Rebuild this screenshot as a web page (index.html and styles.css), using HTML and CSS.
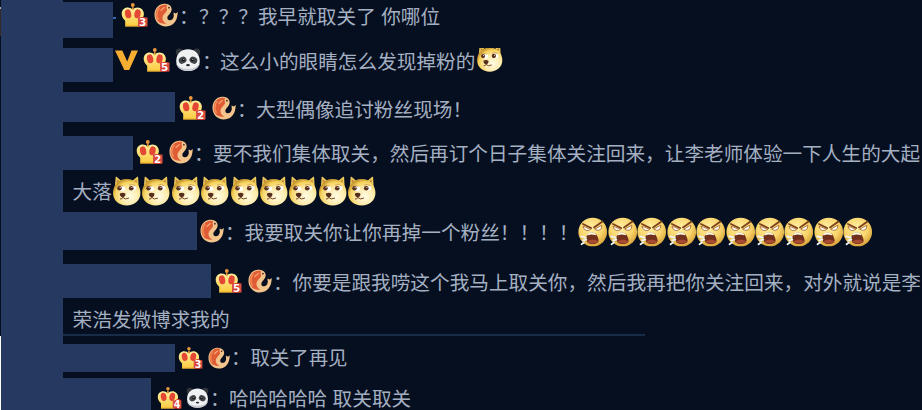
FILE: index.html
```
<!DOCTYPE html>
<html lang="zh-CN">
<head>
    <meta charset="UTF-8">
    <meta name="viewport" content="width=device-width, initial-scale=1.0">
    <title>评论</title>
    <link rel="stylesheet" href="styles.css">
</head>
<body>
    <!-- Icon definitions -->
    <svg class="defs" width="0" height="0">
        <defs>
            <radialGradient id="gold" cx="45%" cy="35%" r="65%">
                <stop offset="0" stop-color="#fff0a6"/>
                <stop offset="0.6" stop-color="#f9d56c"/>
                <stop offset="1" stop-color="#d9a53a"/>
            </radialGradient>
            <radialGradient id="fur" cx="62%" cy="66%" r="65%">
                <stop offset="0" stop-color="#fffbe6"/>
                <stop offset="0.5" stop-color="#fdebaa"/>
                <stop offset="0.85" stop-color="#f5d15c"/>
                <stop offset="1" stop-color="#c99b33"/>
            </radialGradient>
            <linearGradient id="crownFill" x1="0" y1="0" x2="0" y2="1">
                <stop offset="0" stop-color="#fff0a0"/>
                <stop offset="1" stop-color="#fbcb3e"/>
            </linearGradient>
        </defs>
        <symbol id="crown" viewBox="0 0 27 24">
            <path d="M4.2 23.4V17.8C1.7 15.6.6 12.9.7 10.6.8 7 3.4 4.5 6.6 4.5c2 0 3.6.8 5 2.3 1.4-1.5 3-2.3 5-2.3 3.3 0 6.3 2.8 6.3 6.4 0 2.5-1.3 5-3.5 6.9v5.6z" fill="url(#crownFill)"/>
            <path d="M10.9 4.2h1.7v3h-1.7z" fill="#f3a43b"/>
            <circle cx="11.8" cy="2" r="1.9" fill="#ed993d"/>
            <ellipse cx="7.1" cy="10.8" rx="3.1" ry="4.5" fill="#e44835" transform="rotate(-12 7.1 10.8)"/>
            <ellipse cx="16.5" cy="10.8" rx="3.1" ry="4.5" fill="#e44835" transform="rotate(12 16.5 10.8)"/>
            <path d="M4.2 22.9h13" stroke="#efaa2e" stroke-width="0.9"/>
            <path d="M17 14.5h9.5v9H17z" fill="#dc5143"/>
        </symbol>
        <symbol id="pisces" viewBox="0 0 24 24">
            <path d="M17.5 5C16.5 1.5 12 .3 8.5 1 3.5 2 .5 6.5.5 12c0 6.5 5 11.5 11.2 11.5 6 0 10.5-4 11.5-10l.7-4.5-2.1 1.6-2.3-1.2.3 3.6c-.3 2.8-2.2 4.5-4.2 4.3-2.3-.2-3-2.7-1.3-4.8C16.5 10.3 18.2 8 17.5 5z" fill="#f3c48c"/>
            <path d="M13.2 2C8.5 1 3.8 3.2 2.2 7.7.8 12.2 2 17 5 19.2c2.6 1.4 5 1.7 7.3 1.2-2.6-1.1-4-3.2-3.8-5.9C8.8 10.6 13.8 8.8 13 5.9 12.6 4.5 12.2 3.5 13.2 2z" fill="#df5c35"/>
            <path d="M5.3 4.8C2.3 8.7 2.4 13.4 4.5 17" fill="none" stroke="#f08b58" stroke-width="1.5"/>
            <path d="M10.6 4.1C9.3 5.6 8 6.1 6.7 7.8" fill="none" stroke="#f6a773" stroke-width="1.3"/>
            <circle cx="14.9" cy="4.7" r="0.9" fill="#572721"/>
        </symbol>
        <symbol id="panda" viewBox="0 0 26 24">
            <circle cx="4.3" cy="4" r="3.6" fill="#30353b"/>
            <circle cx="21.7" cy="4" r="3.6" fill="#30353b"/>
            <path d="M13 1.2C19.5 1.2 24 5.4 24.6 11 25.8 16.8 21.7 23 13 23S.2 16.8 1.4 11C2 5.4 6.5 1.2 13 1.2z" fill="#f0f1f2"/>
            <path d="M1 15c1.2 5.5 6 8 12 8s10.8-2.5 12-8c-2.1 3.9-6.2 5.8-12 5.8S3.1 18.9 1 15z" fill="#c8ccd0"/>
            <ellipse cx="7.6" cy="12.2" rx="4" ry="3.3" fill="#41454a" transform="rotate(-30 7.6 12.2)"/>
            <ellipse cx="18.4" cy="12.2" rx="4" ry="3.3" fill="#41454a" transform="rotate(30 18.4 12.2)"/>
            <circle cx="8.5" cy="12" r="1.3" fill="#0c0e10"/>
            <circle cx="17.5" cy="12" r="1.3" fill="#0c0e10"/>
            <circle cx="8.8" cy="11.5" r="0.5" fill="#fff"/>
            <circle cx="17.8" cy="11.5" r="0.5" fill="#fff"/>
            <ellipse cx="13" cy="17.2" rx="1.9" ry="1.1" fill="#24282c"/>
        </symbol>
        <symbol id="doge" viewBox="0 0 30 30">
            <path d="M2.8 12 3.7 1.1c.3-.8 1-.6 1.5-.2L11 6zM27.2 12 26.6 1.1c-.2-.8-1-.6-1.5-.2L19 6z" fill="#f0c95c"/>
            <path d="M4.7 6.5 5 3.3 7.5 5zM25.4 6.5 25.1 3.3 22.6 5z" fill="#b98534"/>
            <path d="M15 2.8c4.5 0 8.6 1.7 10.9 5 2 2.6 3.1 5.8 3.1 9.2 0 7.6-6.2 12.7-14 12.7S1 24.6 1 17c0-3.4 1.1-6.6 3.1-9.2 2.3-3.3 6.4-5 10.9-5z" fill="url(#fur)"/>
            <ellipse cx="9.5" cy="12.4" rx="4" ry="2.6" fill="#fff" transform="rotate(14 9.5 12.4)"/>
            <ellipse cx="21" cy="12" rx="3.9" ry="2.8" fill="#fff" transform="rotate(-8 21 12)"/>
            <circle cx="7.6" cy="12.3" r="2.3" fill="#5b3219"/>
            <circle cx="19.6" cy="12.2" r="2.4" fill="#5b3219"/>
            <circle cx="8.3" cy="11.5" r="0.6" fill="#fff"/>
            <circle cx="20.3" cy="11.4" r="0.6" fill="#fff"/>
            <path d="M5 9.6q2.9-1.6 6.2.6M17.5 9.2q3.5-1.8 6.4.6" fill="none" stroke="#cf983b" stroke-width="0.9"/>
            <path d="M8 17.6q3-1.6 5.6 0c.5 2-1 3.9-2.6 4.1-1.7-.2-3.3-2.2-3-4.1z" fill="#562e20"/>
            <path d="M10.8 21.4q-.1 2.1-2.6 1.7M10.8 21.4q2.3 3 6.5.8" fill="none" stroke="#704127" stroke-width="1"/>
        </symbol>
        <symbol id="angry" viewBox="0 0 30 30">
            <circle cx="15" cy="15" r="14.6" fill="url(#gold)"/>
            <path d="M5 9 13 12.3Q11.5 14 8.3 13.4 5.3 12.2 5 9zM24.3 8 17 12.1q2.6 1.9 5.2.9 2.4-1.4 2.1-5z" fill="#fff" stroke="#a8692b" stroke-width="0.9"/>
            <path d="M5 6.8 13.4 11M25 4.3 16.3 10.5" stroke="#7b401c" stroke-width="1.8" stroke-linecap="round"/>
            <path d="M9.7 17.1c2.9-2.5 7.8-1.9 9.4 1 1.4 2.8 2.6 5.6 1.5 7.4-2.4 2.5-8.5 2.3-11.1-.1-1.6-2-1.2-6 .2-8.3z" fill="#70301c"/>
            <path d="M9.6 24.9c2.4-2.6 8.6-2.7 11-.2-.1 2.2-8.7 2.8-11 .2z" fill="#a94b30"/>
            <path d="M9.2 17.4q4.4-4.6 9.4.2l-.7.8q-4.2-1.6-8.1.2z" fill="#fffce5"/>
            <path d="M3.2 19.5 7.8 20.8M5.2 23.5l3.3-.7M3.6 27.5l2.5-1.7" stroke="#eff5f6" stroke-width="1.9" stroke-linecap="round"/>
        </symbol>
    </svg>

    <div class="page">
        <div class="edge"><span class="edge-avatar"></span><span class="edge-light"></span></div>
        <div class="sidebar"></div>
        <div class="comments">
            <div class="comment c1">
                <div class="mask"></div>
                <span class="dash"></span>
                <svg class="crown"><use href="#crown"/><text x="18" y="22.7">3</text></svg>
                <svg class="sign"><use href="#pisces"/></svg>
                <span class="colon">：</span>
                <span class="text">？？？我早就取关了 你哪位</span>
            </div>

            <div class="comment c2">
                <div class="mask"></div>
                <svg class="vip" viewBox="0 0 23 20"><path d="M0 .5h7.3l4.9 11L16.5.5H23L14.2 20H9.3z" fill="#f5ad32"/></svg>
                <svg class="crown"><use href="#crown"/><text x="18" y="22.7">5</text></svg>
                <svg class="sign panda"><use href="#panda"/></svg>
                <span class="colon">：</span>
                <span class="text">这么小的眼睛怎么发现掉粉的</span>
                <svg class="face cut"><use href="#doge"/></svg>
            </div>

            <div class="comment c3">
                <div class="mask"></div>
                <svg class="crown"><use href="#crown"/><text x="18" y="22.7">2</text></svg>
                <svg class="sign"><use href="#pisces"/></svg>
                <span class="colon">：</span>
                <span class="text">大型偶像追讨粉丝现场！</span>
            </div>

            <div class="comment c4">
                <div class="mask"></div>
                <svg class="crown"><use href="#crown"/><text x="18" y="22.7">2</text></svg>
                <svg class="sign"><use href="#pisces"/></svg>
                <span class="colon">：</span>
                <span class="text">要不我们集体取关，然后再订个日子集体关注回来，让李老师体验一下人生的大起</span>
            </div>
            <div class="comment more m4">
                <span class="text">大落</span>
                <svg class="face"><use href="#doge"/></svg>
                <svg class="face"><use href="#doge"/></svg>
                <svg class="face"><use href="#doge"/></svg>
                <svg class="face"><use href="#doge"/></svg>
                <svg class="face"><use href="#doge"/></svg>
                <svg class="face"><use href="#doge"/></svg>
                <svg class="face"><use href="#doge"/></svg>
                <svg class="face"><use href="#doge"/></svg>
                <svg class="face"><use href="#doge"/></svg>
            </div>

            <div class="comment c5">
                <div class="mask"></div>
                <svg class="sign"><use href="#pisces"/></svg>
                <span class="colon">：</span>
                <span class="text">我要取关你让你再掉一个粉丝！！！！</span>
                <svg class="face"><use href="#angry"/></svg>
                <svg class="face"><use href="#angry"/></svg>
                <svg class="face"><use href="#angry"/></svg>
                <svg class="face"><use href="#angry"/></svg>
                <svg class="face"><use href="#angry"/></svg>
                <svg class="face"><use href="#angry"/></svg>
                <svg class="face"><use href="#angry"/></svg>
                <svg class="face"><use href="#angry"/></svg>
                <svg class="face"><use href="#angry"/></svg>
                <svg class="face"><use href="#angry"/></svg>
            </div>

            <div class="comment c6">
                <div class="mask"></div>
                <svg class="crown"><use href="#crown"/><text x="18" y="22.7">5</text></svg>
                <svg class="sign"><use href="#pisces"/></svg>
                <span class="colon">：</span>
                <span class="text">你要是跟我唠这个我马上取关你，然后我再把你关注回来，对外就说是李</span>
            </div>
            <div class="comment more m6">
                <span class="text">荣浩发微博求我的</span>
            </div>
            <div class="divider"></div>

            <div class="comment c7">
                <div class="mask"></div>
                <svg class="crown" viewBox="0 0 27 24"><use href="#crown"/><text x="18" y="22.7">3</text></svg>
                <svg class="sign"><use href="#pisces"/></svg>
                <span class="colon">：</span>
                <span class="text">取关了再见</span>
            </div>

            <div class="comment c8">
                <div class="mask"></div>
                <svg class="crown" viewBox="0 0 27 24"><use href="#crown"/><text x="18" y="22.7">4</text></svg>
                <svg class="sign panda"><use href="#panda"/></svg>
                <span class="colon">：</span>
                <span class="text">哈哈哈哈哈 取关取关</span>
            </div>
        </div>
    </div>
</body>
</html>
```
FILE: styles.css
```
body {
    margin: 0;
    background-color: #050f20;
    color: #a4afc2;
    font-family: "Noto Sans CJK SC", sans-serif;
    font-size: 19.65px;
    font-weight: 400;
    overflow: hidden;
}
.defs {
    display: block;
}
.page {
    display: flex;
    height: 410px;
    overflow: hidden;
}
.edge {
    display: flex;
    flex-direction: column;
    width: 1px;
    padding-top: 7px;
    box-sizing: border-box;
}
.edge-avatar {
    height: 29px;
    background-color: #332b29;
    border-top: 2px solid #aaa;
    box-sizing: border-box;
}
.edge-light {
    flex: 1;
    margin-top: 300px;
    background-color: #fff;
}
.sidebar {
    width: 62px;
    flex-shrink: 0;
    background-color: #263961;
}
.comments {
    flex: 1;
    min-width: 0;
    margin-top: -3px;
}
.comment {
    display: flex;
    align-items: flex-start;
    line-height: 38px;
    white-space: nowrap;
}
.comment svg {
    flex-shrink: 0;
}
.mask {
    flex-shrink: 0;
    background-color: #263961;
}
.text {
    flex-shrink: 0;
    text-spacing-trim: space-all;
}
.colon {
    width: 20px;
    flex-shrink: 0;
    text-indent: 1px;
}
.crown {
    width: 27px;
    height: 24px;
    margin: 6px 0 0 4px;
    overflow: visible;
}
.crown use {
    width: 27px;
    height: 24px;
}
.crown text {
    fill: #fff;
    stroke: #d8392d;
    stroke-width: 1.6px;
    paint-order: stroke;
    font-family: "DejaVu Sans", sans-serif;
    font-size: 10.5px;
    font-weight: bold;
}
.sign {
    width: 24px;
    height: 24px;
    margin: 6px 0 0 6px;
}
.panda {
    width: 26px;
}
.vip {
    width: 23px;
    height: 20px;
    margin: 8px 0 0 2px;
}
.face {
    width: 29.45px;
    height: 30px;
    margin-top: 4px;
}
.cut {
    height: 27px;
    margin-top: 6px;
}
.cut use {
    transform: translateY(-3px);
    width: 29.45px;
    height: 30px;
}
.dash {
    width: 3px;
    height: 2px;
    margin: 20px -3px 0 0;
    background-color: #2c67b2;
}

/* Rows */
.c1 { height: 45px; word-spacing: 1px; }
.c1 .mask { width: 50px; height: 36px; margin-top: 5px; }
.c1 .crown { margin-left: 8px; }
.c1 .colon { width: 21px; }

.c2 { height: 48px; }
.c2 .mask { width: 50px; height: 34px; margin-top: 6px; }
.c2 .crown { margin-left: 5px; }
.c2 .sign { margin-left: 5px; }
.c2 .colon { width: 19px; }

.c3 { height: 44px; }
.c3 .mask { width: 112px; height: 30px; margin-top: 2px; }

.c4 { height: 38px; }
.c4 .mask { width: 70px; height: 34px; margin-top: 2px; }
.c4 .crown { margin-left: 3px; }

.more { padding-left: 9.5px; }
.m4 { height: 41px; }

.c5 { height: 50px; }
.c5 .mask { width: 134px; height: 38px; margin-top: -1px; }
.c5 .sign { margin-left: 3px; }
.c5 .colon { width: 20.5px; }

.c6 { height: 37px; }
.c6 .mask { width: 148px; height: 34px; margin-top: 1px; }
.c6 .colon { width: 20.5px; }
.m6 { height: 34px; }

.divider {
    width: 582px;
    height: 2px;
    margin-bottom: 2px;
    background-color: #182b48;
}

.c7 { height: 41px; font-size: 19.4px; }
.c7 .mask { width: 112px; height: 28px; margin-top: 6px; }
.c7 .crown { width: 25px; height: 22px; margin: 9px 0 0 3px; }
.c7 .sign { width: 22px; height: 22px; margin: 9px 0 0 5px; }
.c7 .colon { width: 20.5px; }

.c8 { height: 31px; line-height: 37px; word-spacing: 1px; }
.c8 .mask { width: 88px; height: 33px; margin-top: -1px; }
.c8 .crown { width: 25px; height: 22px; margin: 8px 0 0 6px; }
.c8 .sign { width: 23px; height: 22px; margin: 8px 0 0 4px; }
```
